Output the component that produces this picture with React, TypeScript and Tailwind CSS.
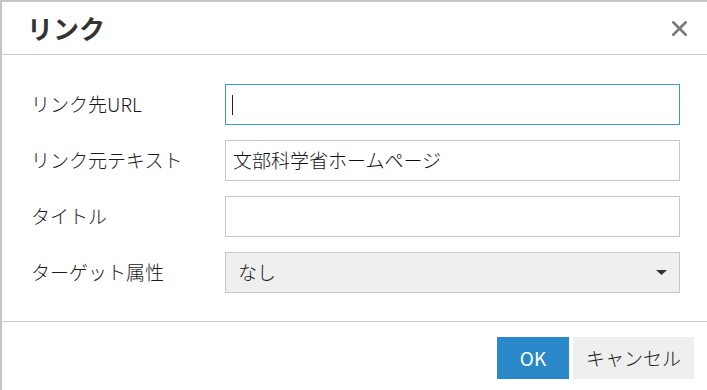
import { X } from 'lucide-react'

const font = { fontFamily: '"Noto Sans CJK JP", "Noto Sans", sans-serif' }

function Row({ label, children }: { label: string; children: React.ReactNode }) {
  return (
    <div className="flex items-center h-[41px]">
      <div className="w-[194px] shrink-0 text-[19px] font-light text-[#1a1a1a]">{label}</div>
      {children}
    </div>
  )
}

export default function App() {
  return (
    <div
      className="w-[707px] h-[390px] bg-white border-l-2 border-t-2 border-[#c4c4c4] flex flex-col overflow-hidden"
      style={font}
    >
      <header className="h-[53px] shrink-0 flex items-center justify-between border-b border-[#cccccc] pl-[25px] pr-[15px]">
        <h1 className="text-[26px] font-bold text-[#333] leading-none">リンク</h1>
        <X size={25} strokeWidth={2.4} className="text-[#7a7a7a]" />
      </header>

      <div className="flex flex-col gap-[15px] pt-[29px] pl-[29px] pr-[27px] h-[267px] shrink-0 border-b border-[#cccccc]">
        <Row label="リンク先URL">
          <div className="flex-1 h-full border border-[#3a96d8] flex items-center px-[6px]">
            <span className="block w-px h-[20px] bg-[#222]" />
          </div>
        </Row>
        <Row label="リンク元テキスト">
          <div className="flex-1 h-full border border-[#c8c8c8] flex items-center px-[7px] text-[19px] font-light text-[#111]">
            文部科学省ホームページ
          </div>
        </Row>
        <Row label="タイトル">
          <div className="flex-1 h-full border border-[#c8c8c8]" />
        </Row>
        <Row label="ターゲット属性">
          <div className="flex-1 h-full border border-[#c8c8c8] bg-[#efefef] flex items-center justify-between pl-[12px] pr-[12px] text-[19px] font-light text-[#1a1a1a]">
            <span>なし</span>
            <svg width="11" height="5" viewBox="0 0 11 5">
              <path d="M0 0 L11 0 L5.5 5 Z" fill="#333" />
            </svg>
          </div>
        </Row>
      </div>

      <footer className="flex justify-end gap-[4px] pt-[15px] pr-[13px]">
        <button className="w-[72px] h-[42px] bg-[#2b88c8] text-white text-[19px]">OK</button>
        <button className="w-[121px] h-[42px] bg-[#efefef] text-[#1a1a1a] text-[19px] font-light">キャンセル</button>
      </footer>
    </div>
  )
}
